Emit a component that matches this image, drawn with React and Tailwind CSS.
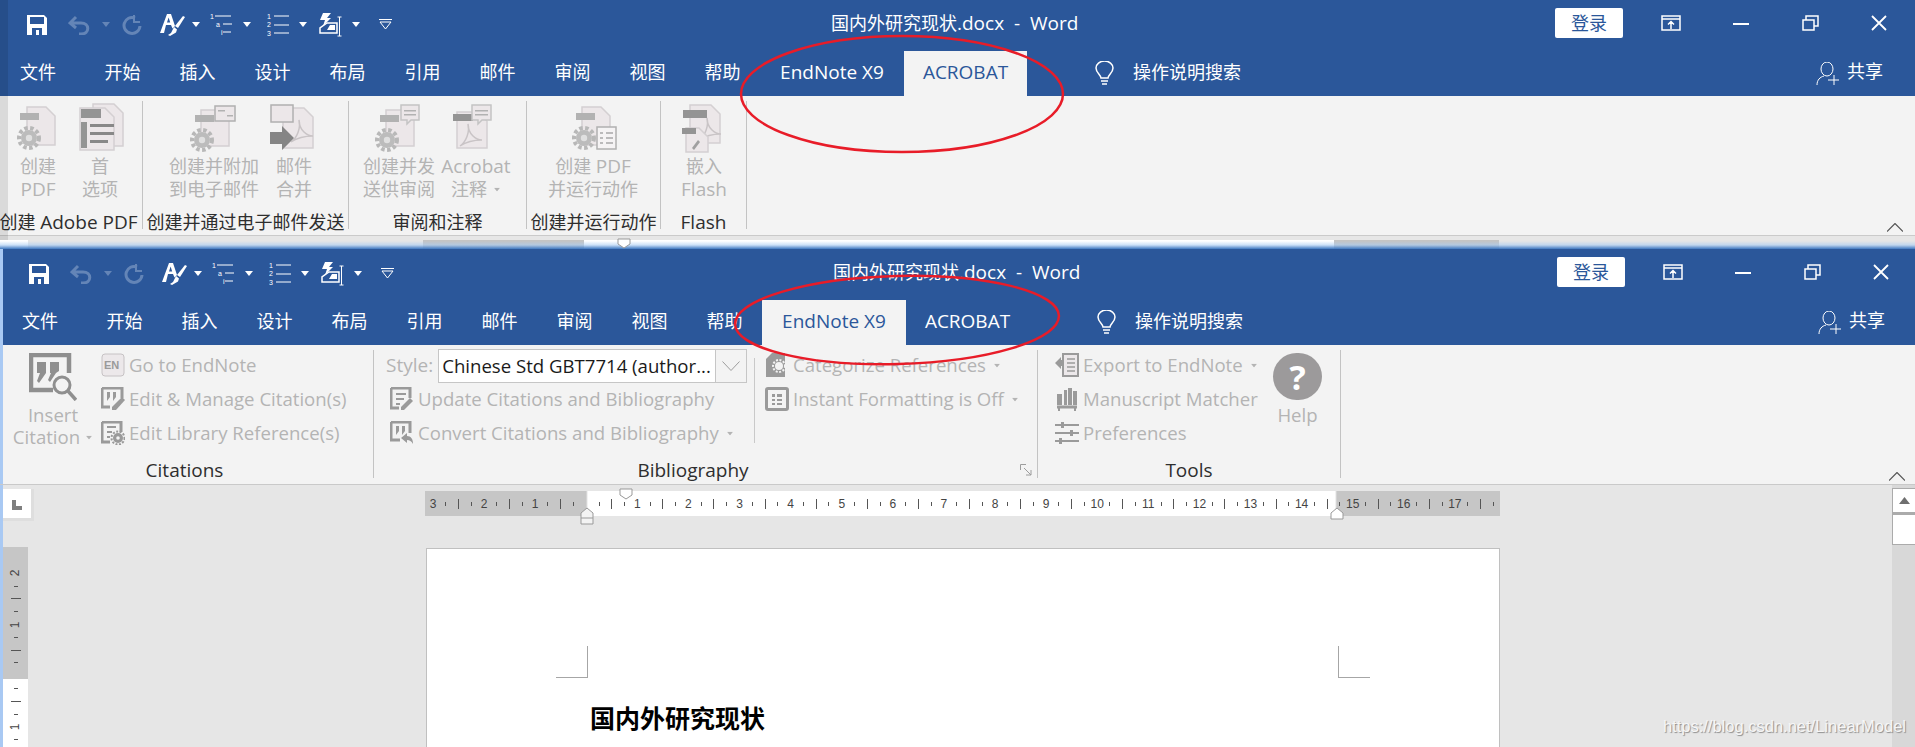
import React from "react";

const FONT = "font-['Open_Sans','Noto_Sans_CJK_SC',sans-serif]";

// latin runs are a touch larger than the chinese around them
function L({ children }) {
  return <span className="text-[19px]">{children}</span>;
}

// small caret next to quick access icons
function Caret({ className = "" }) {
  return (
    <svg width="8" height="5" viewBox="0 0 8 5" className={className}>
      <path d="M0 0h8L4 5z" fill="currentColor" />
    </svg>
  );
}

function QuickAccess() {
  return (
    <div className="flex h-[51px] w-[420px] shrink-0 items-center pl-[27px] pb-[2px] text-white">
      {/* save */}
      <svg width="20" height="20" viewBox="0 0 20 20">
        <path d="M0 0h17l3 3v17H0z" fill="#fff" />
        <rect x="3" y="2" width="14" height="7" fill="#2b579a" />
        <rect x="5" y="13" width="10" height="7" fill="#2b579a" />
        <rect x="9" y="15" width="3" height="5" fill="#fff" />
      </svg>
      {/* undo */}
      <svg width="22" height="20" viewBox="0 0 22 20" fill="none" className="ml-[21px]" stroke="#6485b7" strokeWidth="3">
        <path d="M8 2 2 8l6 5M3 8h10c9 0 9 11 0 11h-2" />
      </svg>
      <Caret className="ml-[12px] text-[#6485b7]" />
      {/* redo */}
      <svg width="20" height="20" viewBox="0 0 20 20" fill="none" className="ml-[12px]" stroke="#6485b7" strokeWidth="3">
        <path d="M13 3A8 8 0 1 0 18 11" />
        <path d="M12 0v7h6" strokeWidth="2" />
      </svg>
      {/* format painter A */}
      <svg width="25" height="24" viewBox="0 0 25 24" className="ml-[18px]" fill="#fff">
        <path d="M0 20 7 1h4l4 12-2.500 2.500L11 12H6l-2 8zM7 9.500h3.200L8.600 4.500z" fillRule="evenodd" />
        <path d="M25 4 18 15l-3-2 8-10z" />
        <path d="M14 14l3 2.500-1 3-6 3.500-2-1 3-2z" />
      </svg>
      <Caret className="ml-[7px]" />
      {/* multilevel list */}
      <svg width="24" height="24" viewBox="0 0 24 24" className="ml-[10px]" stroke="#fff" strokeWidth="1">
        <path d="M5 3h16M13 11h9M13 19h8" />
        <text x="0" y="6" fontSize="7" fill="#fff" stroke="none" fontFamily="Liberation Sans">1</text>
        <text x="6" y="14" fontSize="7" fill="#fff" stroke="none" fontFamily="Liberation Sans">a</text>
        <text x="11" y="22" fontSize="7" fill="#fff" stroke="none" fontFamily="Liberation Sans">i</text>
      </svg>
      <Caret className="ml-[9px]" />
      {/* numbered list */}
      <svg width="24" height="24" viewBox="0 0 24 24" className="ml-[16px]" stroke="#fff" strokeWidth="1">
        <path d="M7 3h15M7 12h15M7 20h15" />
        <text x="0" y="6" fontSize="7" fill="#fff" stroke="none" fontFamily="Liberation Sans">1</text>
        <text x="0" y="14" fontSize="7" fill="#fff" stroke="none" fontFamily="Liberation Sans">2</text>
        <text x="0" y="23" fontSize="7" fill="#fff" stroke="none" fontFamily="Liberation Sans">3</text>
      </svg>
      <Caret className="ml-[8px]" />
      {/* styles */}
      <svg width="24" height="24" viewBox="0 0 24 24" fill="none" className="ml-[12px]">
        <path d="M4 0h8l-4 5h4l-8 8 2-6H1z" fill="#fff" />
        <path d="M1 20v-5l7-5h10v10z" stroke="#fff" strokeWidth="1.500" />
        <path d="M8 17h8v-5h-5z" fill="#fff" />
        <path d="M18.500 4h4M20.500 4v19M18.500 23h4" stroke="#fff" strokeWidth="1" />
      </svg>
      <Caret className="ml-[9px]" />
      {/* customize */}
      <svg width="13" height="11" viewBox="0 0 13 11" fill="none" stroke="#fff" className="ml-[19px]">
        <path d="M0 .5h13M1 3h11L6.500 10z" />
      </svg>
    </div>
  );
}

function WindowButtons() {
  return (
    <div className="ml-auto flex h-[51px] shrink-0 items-start pt-[8px] pr-[28px] text-white">
      <div className="flex h-[30px] w-[68px] items-center justify-center rounded-[2px] bg-white text-[18px] leading-none text-[#2b579a]">登录</div>
      <svg width="20" height="16" viewBox="0 0 20 16" fill="none" stroke="#fff" strokeWidth="1.500" className="ml-[38px] mt-[7px]">
        <path d="M1 1h18v14H1zM1 4h18M10 14V7M7 9.500l3-3 3 3" />
      </svg>
      <div className="ml-[52px] mt-[15px] h-[2px] w-[16px] bg-white" />
      <svg width="17" height="16" viewBox="0 0 17 16" fill="none" stroke="#fff" strokeWidth="1.500" className="ml-[53px] mt-[7px]">
        <path d="M1 5h11v10H1zM4 5V1h12v10h-4" />
      </svg>
      <svg width="16" height="16" viewBox="0 0 16 16" fill="none" stroke="#fff" strokeWidth="1.800" className="ml-[52px] mt-[7px]">
        <path d="M1 1l14 14M15 1 1 15" />
      </svg>
    </div>
  );
}

function TabBar({ active }) {
  const tabs = ["开始", "插入", "设计", "布局", "引用", "邮件", "审阅", "视图", "帮助"];
  const activeTab = "bg-[#f3f3f3] text-[#2b579a]";
  return (
    <div className="flex h-[45px] items-center text-[18px] text-white">
      <div className="w-[85px] pb-[2px] pl-[20px]">文件</div>
      {tabs.map((t) => (
        <div key={t} className="w-[75px] pb-[2px] text-center">{t}</div>
      ))}
      <div className={`flex h-full w-[144px] items-center justify-center pb-[2px] text-[19px] ${active === "endnote" ? activeTab : ""}`}>EndNote X9</div>
      <div className={`flex h-full w-[123px] items-center justify-center pb-[2px] text-[19px] ${active === "acrobat" ? activeTab : ""}`}>ACROBAT</div>
      {/* tell me bulb */}
      <svg width="19" height="24" viewBox="0 0 19 24" fill="none" stroke="#fff" strokeWidth="1.500" className="mb-[2px] ml-[68px]">
        <path d="M6 17c0-3-5-5-5-10a8.500 7 0 0 1 17 0c0 5-5 7-5 10z" />
        <path d="M6 20h7M7 23h5" />
      </svg>
      <div className="ml-[19px] pb-[2px]">操作说明搜索</div>
      <div className="ml-auto flex items-center pr-[32px]">
        <svg width="23" height="24" viewBox="0 0 23 24" fill="none" stroke="#fff" strokeWidth="1">
          <ellipse cx="11" cy="7" rx="6" ry="7" />
          <path d="M1 23c0-5 3-8 7-9M18 13v10M12 18h11" />
        </svg>
        <div className="ml-[8px] -mt-[4px]">共享</div>
      </div>
    </div>
  );
}

function TitleBar({ active }) {
  return (
    <div className="relative bg-[#2b579a]">
      <div className="flex">
        <QuickAccess />
        <div className="flex h-[48px] flex-1 items-center pl-[411px] pb-[2px] text-[18px] text-white">
          <span className="whitespace-pre">国内外研究现状<L>.docx  -  Word</L></span>
        </div>
        <WindowButtons />
      </div>
      <TabBar active={active} />
    </div>
  );
}

/* ---------- acrobat ribbon icons ---------- */
function Page({ x, y, w, h }) {
  return <path d={`M${x} ${y}h${w - 9}l9 9v${h - 9}h${-w}z`} fill="#ece7e9" stroke="#d4d0d2" strokeWidth="1.500" />;
}

function Gear({ cx, cy, r = 8 }) {
  return (
    <g>
      <circle cx={cx} cy={cy} r={r + 2} fill="none" stroke="#b8b8b8" strokeWidth="4" strokeDasharray="3.500 2.500" />
      <circle cx={cx} cy={cy} r={r} fill="#bcbcbc" />
      <circle cx={cx} cy={cy} r={r * 0.4} fill="#e0e0e0" />
    </g>
  );
}

function Bar({ x, y, w = 20, h = 7, fill = "#b2b2b2" }) {
  return <rect x={x} y={y} width={w} height={h} fill={fill} />;
}

function Swoosh({ x, y }) {
  return <path d={`M${x} ${y + 22}c6-4 10-14 8-22c0 10 8 16 14 16c-8 0-16 2-22 6z`} fill="none" stroke="#c9c4c6" strokeWidth="1.500" />;
}

function AcrobatIcon({ kind }) {
  return (
    <svg width="50" height="48" viewBox="0 0 50 48" className="shrink-0 overflow-visible">
      {kind === "create" && (
        <>
          <Page x={14} y={3} w={28} h={38} />
          <Bar x={7} y={9} w={19} h={7} />
          <Gear cx={16} cy={34} r={8} />
        </>
      )}
      {kind === "prefs" && (
        <>
          <Page x={18} y={0} w={30} h={42} />
          <Page x={5} y={4} w={34} h={42} />
          <Bar x={6} y={5} w={20} h={9} fill="#949494" />
          <Bar x={6} y={18} w={6} h={26} fill="#949494" />
          <Bar x={15} y={20} w={24} h={3} fill="#888" />
          <Bar x={15} y={28} w={24} h={3} fill="#888" />
          <Bar x={15} y={36} w={18} h={3} fill="#888" />
        </>
      )}
      {kind === "attach" && (
        <>
          <Page x={12} y={6} w={28} h={36} />
          <Bar x={6} y={11} w={19} h={7} />
          <rect x={26} y={2} width={20} height={15} fill="#ece7e9" stroke="#b0b0b0" strokeWidth="1.500" />
          <Bar x={29} y={6} w={7} h={1.500} />
          <Bar x={38} y={11} w={6} h={1.500} />
          <Gear cx={13} cy={36} r={8} />
        </>
      )}
      {kind === "merge" && (
        <>
          <Page x={14} y={4} w={30} h={40} />
          <rect x={2} y={1} width={22} height={17} fill="#ece7e9" stroke="#b0b0b0" strokeWidth="1.500" />
          <Swoosh x={22} y={16} />
          <path d="M1 28h12v-6l12 12-12 12v-6H1z" fill="#858585" />
        </>
      )}
      {kind === "review" && (
        <>
          <Page x={12} y={6} w={28} h={36} />
          <Bar x={6} y={11} w={19} h={7} />
          <path d="M27 1h18v15h-8l-4 4v-4h-6z" fill="#ece7e9" stroke="#c4c4c4" strokeWidth="1.500" />
          <Bar x={30} y={6} w={12} h={1.500} />
          <Bar x={30} y={10} w={12} h={1.500} />
          <Gear cx={13} cy={36} r={8} />
        </>
      )}
      {kind === "comment" && (
        <>
          <Page x={6} y={8} w={30} h={36} />
          <Bar x={2} y={10} w={20} h={7} fill="#949494" />
          <path d="M21 1h19v15h-9l-4 4v-4h-6z" fill="#ece7e9" stroke="#c4c4c4" strokeWidth="1.500" />
          <Bar x={24} y={6} w={13} h={1.500} />
          <Bar x={24} y={10} w={13} h={1.500} />
          <Swoosh x={9} y={20} />
        </>
      )}
      {kind === "action" && (
        <>
          <Page x={14} y={3} w={28} h={38} />
          <Bar x={8} y={9} w={19} h={7} />
          <Gear cx={16} cy={34} r={8} />
          <rect x={29} y={23} width={19} height={22} fill="#f5f3f4" stroke="#b0b0b0" strokeWidth="1.500" />
          <path d="M32 29h3M38 29h7M32 34h3M38 34h7M32 39h3M38 39h7" stroke="#a8a8a8" strokeWidth="1.500" />
        </>
      )}
      {kind === "flash" && (
        <>
          <Page x={11} y={1} w={30} h={38} />
          <Bar x={4} y={6} w={24} h={8} fill="#949494" />
          <Swoosh x={20} y={14} />
          <Page x={7} y={24} w={22} h={24} />
          <Bar x={3} y={24} w={14} h={6} fill="#949494" />
          <path d="M13 44l6-8 2 2-6 8z" fill="#a0a0a0" />
        </>
      )}
    </svg>
  );
}

/* ---------- endnote small icons ---------- */
function SmallIcon({ kind }) {
  const c = "#9a9a9a";
  return (
    <svg width="24" height="24" viewBox="0 0 24 24" fill="none" className="shrink-0">
      {kind === "en" && (
        <>
          <rect x="1" y="1" width="22" height="22" rx="3" fill="#ece8ea" stroke="#c6c2c4" />
          <text x="3" y="16" fontSize="11" fontWeight="700" fill={c} fontFamily="Liberation Sans">EN</text>
        </>
      )}
      {kind === "edit" && (
        <>
          <path d="M1 1h20v10M1 1v19h8" stroke={c} strokeWidth="3" />
          <path d="M6 5h3v5l-3 4zM12 5h3v5l-3 4z" fill={c} />
          <path d="M21 10l3 3-9 10h-4v-3z" fill={c} />
        </>
      )}
      {kind === "lib" && (
        <>
          <path d="M1 1h19v10M1 1v20h8" stroke={c} strokeWidth="3" />
          <path d="M6 6h9M6 11h5M6 16h3" stroke={c} strokeWidth="2" />
          <circle cx="17" cy="17" r="5" fill={c} />
          <circle cx="17" cy="17" r="6.500" stroke={c} strokeWidth="2" strokeDasharray="2 1.500" />
          <circle cx="17" cy="17" r="1.800" fill="#f3f3f3" />
        </>
      )}
      {kind === "update" && (
        <>
          <path d="M1 1h19v10M1 1v20h8" stroke={c} strokeWidth="3" />
          <path d="M6 7h10M6 12h8M6 17h4" stroke={c} strokeWidth="2" />
          <path d="M20 11l3 3-9 9h-3v-3z" fill={c} />
        </>
      )}
      {kind === "convert" && (
        <>
          <path d="M1 1h19v11M1 1v18h9" stroke={c} strokeWidth="3" />
          <path d="M6 5h3v5l-3 4zM12 5h3v5l-3 4z" fill={c} />
          <path d="M11 17l6-5v3c4 0 6 3 6 8-2-3-3-4-6-4v3z" fill={c} />
        </>
      )}
      {kind === "cat" && (
        <>
          <path d="M7 0h13v24H1V6z" fill={c} />
          <circle cx="14" cy="13" r="4" fill="#f3f3f3" />
          <circle cx="14" cy="13" r="6" stroke="#f3f3f3" strokeWidth="2" strokeDasharray="2 1.500" />
        </>
      )}
      {kind === "instant" && (
        <>
          <rect x="1.500" y="1.500" width="21" height="21" rx="1.500" stroke={c} strokeWidth="3" />
          <path d="M7 7h3v3H7zM12 7h5v3h-5zM7 12h3v2H7zM12 12h5v2h-5zM7 16h3v2H7zM12 16h5v2h-5z" fill={c} />
        </>
      )}
      {kind === "export" && (
        <>
          <path d="M8 1h15v22H8z" fill="#ece8ea" stroke={c} strokeWidth="2" />
          <path d="M12 6h8M12 10h8M12 14h8M12 18h8" stroke={c} strokeWidth="1.500" />
          <path d="M0 10l6-6v3h3v6H6v3z" fill={c} />
        </>
      )}
      {kind === "books" && (
        <>
          <path d="M2 20h20M3 23h2M19 23h2" stroke={c} strokeWidth="3" />
          <path d="M2 7h5v11H2zM9 3h3v15H9zM13 1h4v17h-4zM18 4h4v14h-4z" fill={c} />
        </>
      )}
      {kind === "prefs" && (
        <>
          <path d="M0 4h24M0 12h24M0 20h24" stroke={c} strokeWidth="2" />
          <path d="M6 1h3v6H6zM15 9h3v6h-3zM4 17h3v6H4z" fill={c} />
        </>
      )}
    </svg>
  );
}

function RibbonGroup({ width, pad, label, labelClass = "", children }) {
  return (
    <div className={`mt-[5px] flex h-[128px] shrink-0 flex-col border-r border-[#c3c3c3] ${width}`}>
      <div className={`flex h-[109px] shrink-0 pt-[3px] ${pad}`}>{children}</div>
      <div className={`flex h-[24px] shrink-0 justify-center whitespace-nowrap text-[18px] leading-[24px] text-[#2e2e2e] ${labelClass}`}>
        <span>{label}</span>
      </div>
    </div>
  );
}

function BigButton({ icon, lines, width, caret }) {
  return (
    <div className={`flex shrink-0 flex-col items-center text-[18px] leading-[23px] text-[#b4b4b4] ${width}`}>
      <div className="h-[49px]">
        <AcrobatIcon kind={icon} />
      </div>
      <div className="mt-[2px] whitespace-nowrap">{lines[0]}</div>
      <div className="flex items-center whitespace-nowrap">
        {lines[1]}
        {caret && <Caret className="ml-[6px] scale-75 text-[#b4b4b4]" />}
      </div>
    </div>
  );
}

function Collapse() {
  return (
    <svg width="16" height="9" viewBox="0 0 16 9" fill="none" stroke="#555" strokeWidth="1.200" className="mb-[3px] ml-auto mr-[12px] self-end">
      <path d="M0 8.500 8 .5l8 8" />
    </svg>
  );
}

function AcrobatRibbon() {
  return (
    <div className="flex h-[139px] items-start bg-[#f3f3f3]">
      <RibbonGroup width="w-[143px]" pad="pl-[13px]" labelClass="pr-[5px]" label={<>创建 <L>Adobe PDF</L></>}>
        <BigButton icon="create" lines={["创建", <L>PDF</L>]} width="w-[50px]" />
        <BigButton icon="prefs" lines={["首", "选项"]} width="w-[50px] ml-[12px]" />
      </RibbonGroup>
      <RibbonGroup width="w-[206px]" pad="pl-[26px]" label="创建并通过电子邮件发送">
        <BigButton icon="attach" lines={["创建并附加", "到电子邮件"]} width="w-[90px]" />
        <BigButton icon="merge" lines={["邮件", "合并"]} width="w-[50px] ml-[10px]" />
      </RibbonGroup>
      <RibbonGroup width="w-[178px]" pad="pl-[14px]" label="审阅和注释">
        <BigButton icon="review" lines={["创建并发", "送供审阅"]} width="w-[72px]" />
        <BigButton icon="comment" lines={[<L>Acrobat</L>, "注释"]} width="w-[70px] ml-[6px]" caret />
      </RibbonGroup>
      <RibbonGroup width="w-[134px]" pad="pl-[21px]" label="创建并运行动作">
        <BigButton icon="action" lines={[<>创建 <L>PDF</L></>, "并运行动作"]} width="w-[90px]" />
      </RibbonGroup>
      <RibbonGroup width="w-[86px]" pad="pl-[18px]" label={<L>Flash</L>}>
        <BigButton icon="flash" lines={["嵌入", <L>Flash</L>]} width="w-[50px]" />
      </RibbonGroup>
      <Collapse />
    </div>
  );
}

function RowItem({ icon, label, caret, className = "" }) {
  return (
    <div className={`flex h-[34px] items-center whitespace-nowrap text-[18.600px] text-[#b4b4b4] ${className}`}>
      <SmallIcon kind={icon} />
      <span className="ml-[4px]">{label}</span>
      {caret && <Caret className="ml-[7px] scale-75" />}
    </div>
  );
}

function GroupLabel({ children, launcher, className = "" }) {
  return (
    <div className={`flex h-[24px] shrink-0 items-center text-[19px] leading-[24px] text-[#2e2e2e] ${className}`}>
      <div className="flex-1 text-center">{children}</div>
      {launcher && (
        <svg width="12" height="12" viewBox="0 0 12 12" fill="none" stroke="#9c9c9c" className="ml-[8px] mr-[5px]">
          <path d="M.5 6V.5H6M4 4l7 7M11 6v5H6" />
        </svg>
      )}
    </div>
  );
}

function EndNoteRibbon() {
  return (
    <div className="flex h-[139px] items-start bg-[#f3f3f3]">
      {/* Citations */}
      <div className="mt-[5px] flex h-[128px] w-[372px] shrink-0 flex-col border-r border-[#c3c3c3]">
        <div className="flex h-[108px] shrink-0 pl-[9px]">
          <div className="flex w-[84px] flex-col items-center text-[18.600px] leading-[22px] text-[#b4b4b4]">
            <svg width="48" height="48" viewBox="0 0 48 48" fill="none" className="mt-[3px] shrink-0">
              <path d="M24 37H2V2h38v18" stroke="#8f8f8f" strokeWidth="4.500" />
              <path d="M8 9h9v11l-7 10-2-2 3-8H8zM21 9h9v9l-3 2-6 9-2-2 3-7h-1z" fill="#8f8f8f" />
              <circle cx="33" cy="32" r="8" stroke="#8f8f8f" strokeWidth="3" />
              <path d="M39 38l8 9" stroke="#8f8f8f" strokeWidth="3.500" />
            </svg>
            <div className="mt-[3px]">Insert</div>
            <div className="flex items-center">
              Citation
              <Caret className="ml-[5px] scale-75" />
            </div>
          </div>
          <div className="ml-[6px] -mt-[2px] flex flex-col">
            <RowItem icon="en" label="Go to EndNote" />
            <RowItem icon="edit" label="Edit & Manage Citation(s)" />
            <RowItem icon="lib" label="Edit Library Reference(s)" />
          </div>
        </div>
        <GroupLabel className="pr-[6px]">Citations</GroupLabel>
      </div>
      {/* Bibliography */}
      <div className="mt-[5px] flex h-[128px] w-[664px] shrink-0 flex-col border-r border-[#c3c3c3]">
        <div className="flex h-[108px] shrink-0 pl-[12px]">
          <div className="-mt-[1px] flex w-[361px] shrink-0 flex-col">
            <div className="flex h-[34px] items-center">
              <span className="pb-[1px] text-[19px] text-[#b4b4b4]">Style:</span>
              <div className="ml-[5px] flex h-[34px] w-[310px] items-center border border-[#c6c6c6] bg-white pl-[3px] text-[18.600px] text-[#1a1a1a]">
                <span className="flex-1 whitespace-nowrap pb-[1px]">Chinese Std GBT7714 (author...</span>
                <div className="flex h-full w-[31px] shrink-0 items-center justify-center border-l border-[#c6c6c6] bg-[#f3f3f3]">
                  <svg width="18" height="10" viewBox="0 0 18 10" fill="none" stroke="#9c9c9c">
                    <path d="M.5.5 9 9.500 17.500.5" />
                  </svg>
                </div>
              </div>
            </div>
            <RowItem icon="update" label="Update Citations and Bibliography" className="-mt-px pl-[4px]" />
            <RowItem icon="convert" label="Convert Citations and Bibliography" caret className="pl-[4px]" />
          </div>
          <div className="ml-[7px] mt-[8px] h-[85px] w-px shrink-0 bg-[#c9c9c9]" />
          <div className="ml-[10px] -mt-[2px] flex flex-col">
            <RowItem icon="cat" label="Categorize References" caret />
            <RowItem icon="instant" label="Instant Formatting is Off" caret />
          </div>
        </div>
        <GroupLabel launcher>Bibliography</GroupLabel>
      </div>
      {/* Tools */}
      <div className="mt-[5px] flex h-[128px] w-[303px] shrink-0 flex-col border-r border-[#c3c3c3]">
        <div className="flex h-[108px] shrink-0 pl-[17px]">
          <div className="-mt-[2px] flex w-[218px] shrink-0 flex-col">
            <RowItem icon="export" label="Export to EndNote" caret />
            <RowItem icon="books" label="Manuscript Matcher" />
            <RowItem icon="prefs" label="Preferences" />
          </div>
          <div className="flex flex-col items-center text-[18.600px] leading-[22px] text-[#b4b4b4]">
            <div className="mt-[3px] flex h-[47px] w-[49px] items-center justify-center rounded-full bg-[#9c9a9b] text-[34px] font-bold leading-none text-white">?</div>
            <div className="mt-[4px]">Help</div>
          </div>
        </div>
        <GroupLabel>Tools</GroupLabel>
      </div>
      <Collapse />
    </div>
  );
}

function RulerCell({ n }) {
  return (
    <div className="grid h-full w-[51.1px] shrink-0 grid-cols-4 items-center justify-items-center">
      <span className="font-['Liberation_Sans'] text-[12px] leading-none text-[#444]">{n}</span>
      <i className="h-[4px] w-px bg-[#555]" />
      <i className="h-[10px] w-px bg-[#555]" />
      <i className="h-[4px] w-px bg-[#555]" />
    </div>
  );
}

function VRulerCell({ n }) {
  return (
    <div className="grid h-[51.2px] w-full shrink-0 grid-rows-4 items-center justify-items-center">
      <span className="-rotate-90 font-['Liberation_Sans'] text-[12px] leading-none text-[#444]">{n}</span>
      <i className="h-px w-[4px] bg-[#555]" />
      <i className="h-px w-[10px] bg-[#555]" />
      <i className="h-px w-[4px] bg-[#555]" />
    </div>
  );
}

function Workspace() {
  const nums = [3, 2, 1, "", 1, 2, 3, 4, 5, 6, 7, 8, 9, 10, 11, 12, 13, 14, 15, 16, 17];
  return (
    <div className="relative ml-[3px] flex h-[263px] overflow-hidden bg-[#e6e6e6]">
      {/* selector and vertical ruler */}
      <div className="flex w-[422px] shrink-0 flex-col pt-[4px]">
        <div className="flex h-[32px] w-[31px] items-center justify-center border-r-[3px] border-b-[3px] border-[#dedede] bg-white">
          <div className="mt-[3px] h-[10px] w-[10px] border-b-[4px] border-l-[4px] border-[#7f7f7f]" />
        </div>
        <div className="mt-[26px] flex w-[25px] flex-1 flex-col overflow-hidden bg-[linear-gradient(to_bottom,#c6c6c6_132px,#fff_132px)] pt-[20px]">
          <VRulerCell n={2} />
          <VRulerCell n={1} />
          <VRulerCell n="" />
          <VRulerCell n={1} />
        </div>
      </div>
      {/* horizontal ruler and page */}
      <div className="flex w-[1075px] shrink-0 flex-col pt-[6px]">
        <div className="relative h-[25px]">
          <div className="flex h-full overflow-hidden bg-[linear-gradient(to_right,#c6c6c6_161px,#fff_163px,#fff_910px,#c6c6c6_912px)] pl-[1.6px]">
            {nums.map((n, i) => (
              <RulerCell key={i} n={n} />
            ))}
          </div>
          {/* first line, hanging and right indent markers */}
          <svg width="14" height="12" viewBox="0 0 14 12" className="absolute -top-[3px] left-[194px]" fill="#fff" stroke="#999">
            <path d="M1 1h12v6l-6 4-6-4z" />
          </svg>
          <svg width="14" height="18" viewBox="0 0 14 18" className="absolute top-[16px] left-[155px]" fill="#f3f3f3" stroke="#999">
            <path d="M1 17V6l6-5 6 5v11zM1 11h12" />
          </svg>
          <svg width="14" height="13" viewBox="0 0 14 13" className="absolute top-[16px] left-[905px]" fill="#fff" stroke="#999">
            <path d="M1 12V6l6-5 6 5v6z" />
          </svg>
        </div>
        <div className="ml-px mt-[32px] flex-1 border border-b-0 border-[#c0c0c0] bg-white">
          <div className="flex justify-between px-[129px] pt-[97px]">
            <div className="h-[32px] w-[32px] border-r border-b border-[#a6a6a6]" />
            <div className="h-[32px] w-[32px] border-b border-l border-[#a6a6a6]" />
          </div>
          <div className="mt-[22px] pl-[163px] font-['Noto_Sans_CJK_SC',sans-serif] text-[25px] font-bold leading-[34px] text-black">国内外研究现状</div>
        </div>
      </div>
      <div className="flex-1" />
      {/* scrollbar */}
      <div className="flex w-[23px] shrink-0 flex-col bg-[#d8d8d8] pt-[3px]">
        <div className="flex h-[25px] items-center justify-center border border-r-0 border-[#ababab] bg-white">
          <svg width="11" height="7" viewBox="0 0 11 7"><path d="M0 7 5.500 0 11 7z" fill="#6f6f6f" /></svg>
        </div>
        <div className="h-[32px] border border-t-[2px] border-r-0 border-[#ababab] bg-white" />
      </div>
      <div className="absolute bottom-[9px] right-[9px] font-['Liberation_Sans',sans-serif] text-[16.500px] text-[#f6f6f6] [text-shadow:1px_1px_1px_#8c8c8c]">https://blog.csdn.net/LinearModel</div>
    </div>
  );
}

// sliver of the first window's ruler that shows above the second window
function Strip() {
  return (
    <div className="relative flex h-[14px] overflow-hidden border-t border-[#cacaca] bg-[#e6e6e6]">
      <div className="mt-[4px] w-[28px] bg-white" />
      <div className="ml-[395px] mt-[4px] w-[161px] bg-[#c4c4c4]" />
      <div className="mt-[4px] w-[750px] bg-white" />
      <div className="mt-[4px] w-[165px] bg-[#c4c4c4]" />
      <div className="absolute inset-x-0 bottom-0 h-[8px] bg-gradient-to-b from-transparent via-[#a9ccf3]/60 to-[#3f78c0]" />
      <svg width="14" height="11" viewBox="0 0 14 11" className="absolute top-[2px] left-[617px]" fill="#fff" stroke="#999">
        <path d="M1 1h12v5l-6 4-6-4z" />
      </svg>
    </div>
  );
}

export default function App() {
  return (
    <div className={`relative h-[747px] w-[1915px] overflow-hidden bg-[#a9c9f3] ${FONT}`}>
      {/* first window, ACROBAT tab */}
      <TitleBar active="acrobat" />
      <AcrobatRibbon />
      <Strip />
      <div className="absolute top-0 left-0 h-[240px] w-[8px] bg-[#000]/10" />

      {/* second window, EndNote tab */}
      <div className="ml-[3px] overflow-hidden">
        <div className="-ml-px w-[1915px]">
          <TitleBar active="endnote" />
          <EndNoteRibbon />
        </div>
      </div>
      <div className="border-t border-[#c9c9c9]" />
      <Workspace />

      {/* red hand drawn ellipses */}
      <svg width="1915" height="400" viewBox="0 0 1915 400" fill="none" stroke="#e81c28" strokeWidth="2.500" className="pointer-events-none absolute top-0 left-0">
        <ellipse cx="902" cy="94" rx="161" ry="58" />
        <ellipse cx="897" cy="320" rx="162" ry="44" transform="rotate(-1.500 897 320)" />
      </svg>
    </div>
  );
}
